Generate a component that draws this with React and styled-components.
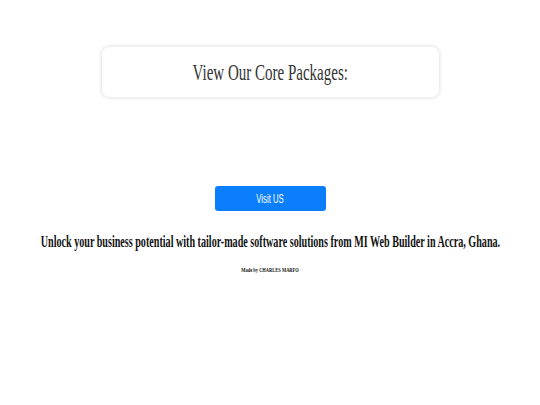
import React from "react";
import styled, { createGlobalStyle } from "styled-components";

const Global = createGlobalStyle`
  html, body {
    margin: 0;
    padding: 0;
    background: #ffffff;
  }
`;

const Page = styled.div`
  width: 540px;
  height: 405px;
  display: flex;
  flex-direction: column;
  align-items: center;
  padding-top: 47px;
  box-sizing: border-box;
  font-family: "Liberation Serif", "Times New Roman", serif;
  color: #111;
`;

const Card = styled.div`
  width: 337px;
  height: 50px;
  display: flex;
  align-items: center;
  justify-content: center;
  border-radius: 7px;
  background: #fff;
  box-shadow: 0 0 4px rgba(0, 0, 0, 0.18);
`;

// the page text is rendered narrow, like a condensed face
const Squeeze = styled.span`
  display: inline-block;
  white-space: nowrap;
  transform: scaleX(${({ $x }) => $x});
`;

const CardTitle = styled(Squeeze)`
  font-size: 24px;
  color: #333;
`;

const Button = styled.button`
  margin-top: 89px;
  width: 111px;
  height: 25px;
  border: none;
  border-radius: 3px;
  background: #0a7efb;
  color: #fff;
  font-family: "Liberation Sans", Arial, sans-serif;
  font-size: 13px;
  display: flex;
  align-items: center;
  justify-content: center;
  padding: 0;
`;

const Headline = styled(Squeeze)`
  margin-top: 22px;
  font-size: 16px;
  font-weight: bold;
`;

const Credit = styled(Squeeze)`
  margin-top: 15px;
  font-size: 7px;
  font-weight: bold;
`;

export default function App() {
  return (
    <>
      <Global />
      <Page>
        <Card>
          <CardTitle $x={0.625}>View Our Core Packages:</CardTitle>
        </Card>
        <Button>
          <Squeeze $x={0.6}>Visit US</Squeeze>
        </Button>
        <Headline $x={0.632}>
          Unlock your business potential with tailor-made software solutions from MI Web Builder in Accra, Ghana.
        </Headline>
        <Credit $x={0.64}>Made by CHARLES MARFO</Credit>
      </Page>
    </>
  );
}
